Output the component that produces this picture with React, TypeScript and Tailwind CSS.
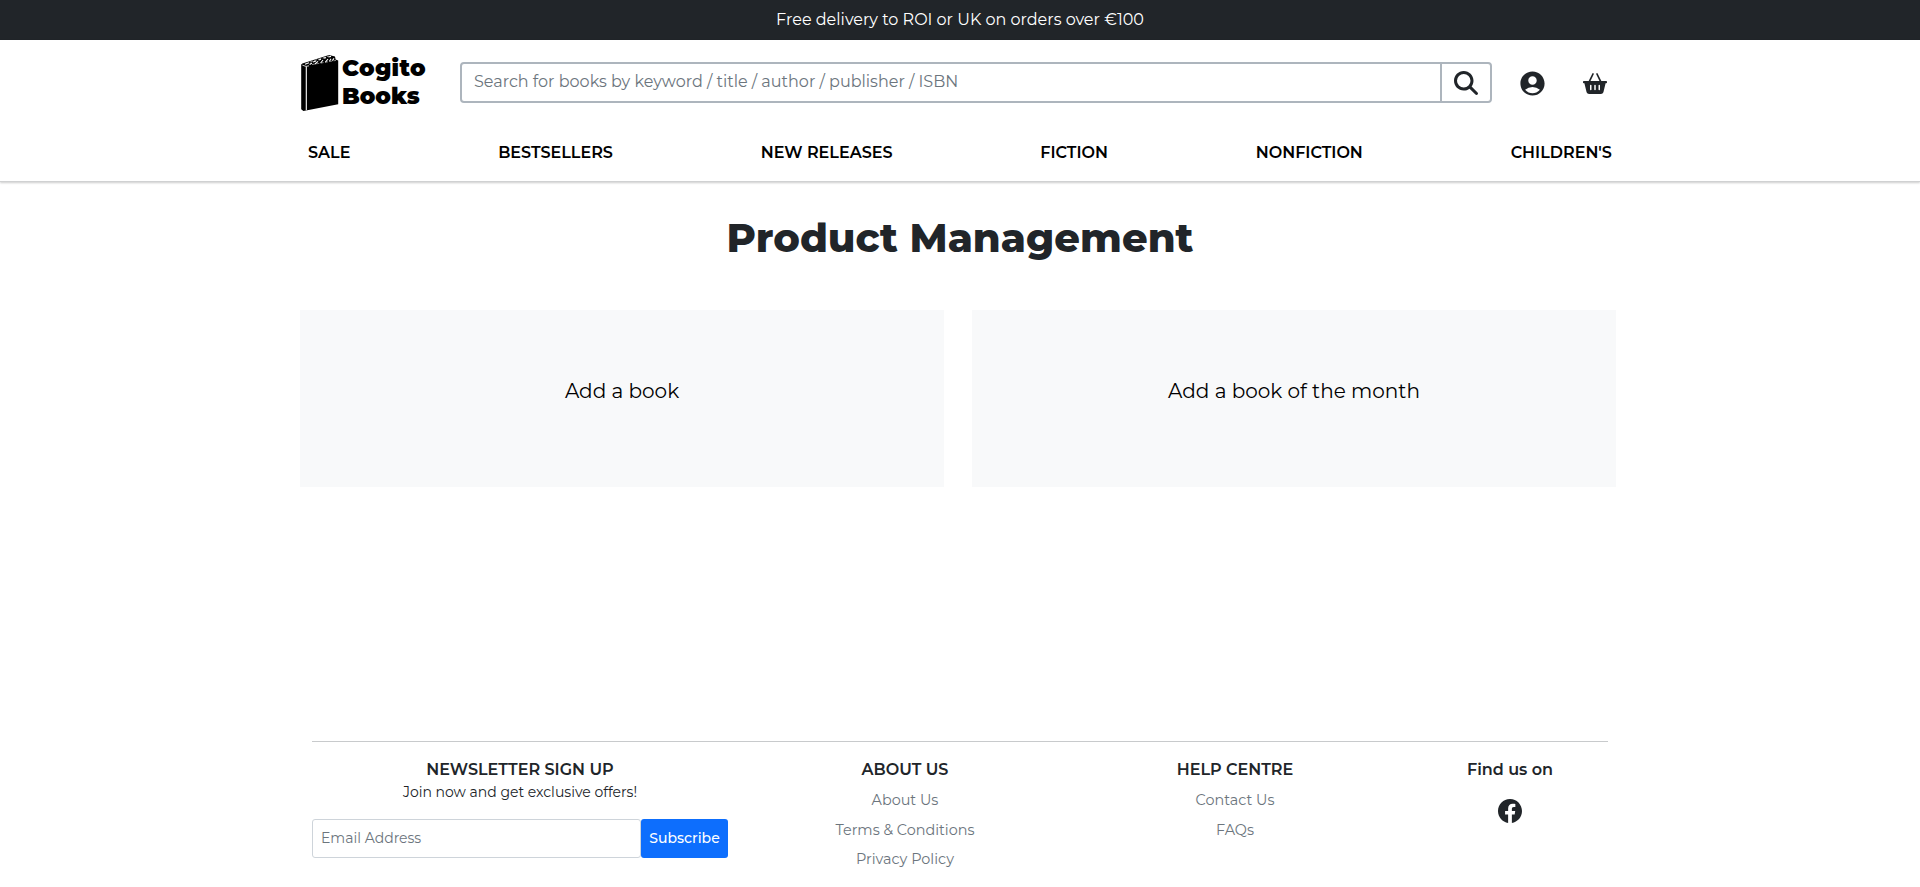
import { FaMagnifyingGlass } from "react-icons/fa6";
import { MdAccountCircle } from "react-icons/md";
import { BsFacebook } from "react-icons/bs";

const NAV = ["SALE", "BESTSELLERS", "NEW RELEASES", "FICTION", "NONFICTION", "CHILDREN'S"];
const ACTIONS = ["Add a book", "Add a book of the month"];

function BookLogo() {
  return (
    <svg className="h-[58px] w-[38px] shrink-0" viewBox="0 0 38 58" aria-hidden="true">
      <path d="M0.2 10.6 L1.4 9.4 L28 0.9 L34 2.6 L34.6 5.4 L37.2 6.6 V50.2 L5 56.6 L2.4 57 L0.2 55.2 Z" fill="#000" />
      <path d="M5.3 12.6 V56.2" stroke="#fff" strokeWidth="1.1" />
      <path d="M1.4 11.2 L5 12.4 L8 11.8" stroke="#fff" strokeWidth="0.8" fill="none" />
      <path
        d="M4 10.2 L8 8.8 M8.6 10.4 L11 9 M12 8 L15 7 M14 10 L17 7.4 M17.6 6 L20 5.2 M19.6 9 L22 6 M22.6 4.2 L25 3.6 M24.4 8.2 L27 5 M27.4 3 L30 2.4 M28.4 7.2 L30 4.8 M31.4 6.6 L33 4.4"
        stroke="#fff"
        strokeWidth="1.1"
        fill="none"
      />
      <path d="M11 10.6 L35 6.4 M9 8 L28 2" stroke="#fff" strokeWidth="0.5" strokeDasharray="3 1.4" />
    </svg>
  );
}

function BasketIcon() {
  return (
    <svg className="h-6 w-6" viewBox="0 0 24 24" aria-hidden="true">
      <path d="M10 2 L6.4 9.4 M14 2 L17.6 9.4" stroke="#212529" strokeWidth="1.7" strokeLinecap="round" />
      <path
        fillRule="evenodd"
        fill="#212529"
        d="M0.8 9 H23.2 A0.8 0.8 0 0 1 24 9.8 V10.4 A0.8 0.8 0 0 1 23.2 11.2 H22.6 L20.4 20.2 A2.6 2.6 0 0 1 17.9 22 H6.1 A2.6 2.6 0 0 1 3.6 20.2 L1.4 11.2 H0.8 A0.8 0.8 0 0 1 0 10.4 V9.8 A0.8 0.8 0 0 1 0.8 9 Z M7 13.4 V17.4 A0.75 0.75 0 0 0 8.5 17.4 V13.4 A0.75 0.75 0 0 0 7 13.4 Z M11.25 13.4 V17.4 A0.75 0.75 0 0 0 12.75 17.4 V13.4 A0.75 0.75 0 0 0 11.25 13.4 Z M15.5 13.4 V17.4 A0.75 0.75 0 0 0 17 17.4 V13.4 A0.75 0.75 0 0 0 15.5 13.4 Z"
      />
    </svg>
  );
}

function LinkColumn({ title, links, className }: { title: string; links: string[]; className: string }) {
  return (
    <div className={className}>
      <h2 className="text-base/6 font-semibold">{title}</h2>
      <ul className="mt-2 flex flex-col gap-2 text-[14.4px]/[21.6px] text-[#6c757d]">
        {links.map((l) => (
          <li key={l}>
            <a href="#">{l}</a>
          </li>
        ))}
      </ul>
    </div>
  );
}

export default function App() {
  return (
    <div className="flex h-[887px] flex-col overflow-hidden bg-white font-['Montserrat','Inter',sans-serif] text-[#212529]">
      <div className="h-10 shrink-0 bg-[#212529] pt-2 text-center text-base/6 text-white">
        Free delivery to ROI or UK on orders over €100
      </div>

      <header className="h-[142px] shrink-0 border-b border-[#d0d1d2] shadow-[0_1px_2px_rgba(0,0,0,0.2)]">
        <div className="mx-auto flex h-[85px] w-[1320px] items-center">
          <a href="#" className="flex w-[160px] items-center gap-[3px] pl-px">
            <BookLogo />
            <span className="pb-px text-[23px]/[28px] font-black text-black">
              <span className="tracking-[0.35px]">Cogito</span>
              <br />
              Books
            </span>
          </a>
          <form className="flex h-[41px] w-[1032px] rounded border-2 border-[#adb5bd]">
            <input
              className="w-[978px] px-3 pb-px text-base/6 outline-none placeholder:text-[#6c757d]"
              placeholder="Search for books by keyword / title / author / publisher / ISBN"
            />
            <button type="button" className="flex flex-1 items-center justify-center border-l-2 border-[#adb5bd] pt-px">
              <FaMagnifyingGlass className="size-6" />
            </button>
          </form>
          <a href="#" className="ml-[26px] pt-px">
            <MdAccountCircle className="size-[29px]" />
          </a>
          <a href="#" className="ml-[36px] pt-[2px]">
            <BasketIcon />
          </a>
        </div>
        <nav className="mx-auto flex w-[1304px] justify-between pt-4 text-base/6 font-semibold text-black">
          {NAV.map((n) => (
            <a key={n} href="#">
              {n}
            </a>
          ))}
        </nav>
      </header>

      <main className="mx-auto w-[1320px] pt-8">
        <h1 className="text-center text-[40px]/[48px] font-extrabold">Product Management</h1>
        <div className="mt-12 grid w-[1316px] grid-cols-2 gap-7">
          {ACTIONS.map((a) => (
            <a key={a} href="#" className="h-[177px] bg-[#f8f9fa] pt-[66px] text-center text-xl/[30px] text-black">
              {a}
            </a>
          ))}
        </div>
      </main>

      <footer className="mx-auto mt-[254px] flex w-[1296px] shrink-0 border-t border-[#c8cacc] pt-4 text-center">
        <div className="w-[416px] shrink-0">
          <h2 className="text-base/6 font-semibold">NEWSLETTER SIGN UP</h2>
          <p className="text-sm/[21px]">Join now and get exclusive offers!</p>
          <form className="mt-4 flex h-[39px]">
            <input
              className="w-[329px] rounded-[3px] border border-[#ced4da] px-2 text-sm/[21px] outline-none placeholder:text-[#6c757d]"
              placeholder="Email Address"
            />
            <button type="button" className="flex-1 rounded-[3px] bg-[#0d6efd] text-sm/[21px] font-medium text-white">
              Subscribe
            </button>
          </form>
        </div>
        <LinkColumn
          className="ml-[67px] w-[220px] shrink-0"
          title="ABOUT US"
          links={["About Us", "Terms & Conditions", "Privacy Policy"]}
        />
        <LinkColumn className="ml-[110px] w-[220px] shrink-0" title="HELP CENTRE" links={["Contact Us", "FAQs"]} />
        <div className="ml-[67px] w-[196px] shrink-0">
          <h2 className="text-base/6 font-semibold">Find us on</h2>
          <a href="#" className="mt-[17px] flex justify-center">
            <BsFacebook className="size-6" />
          </a>
        </div>
      </footer>
    </div>
  );
}
